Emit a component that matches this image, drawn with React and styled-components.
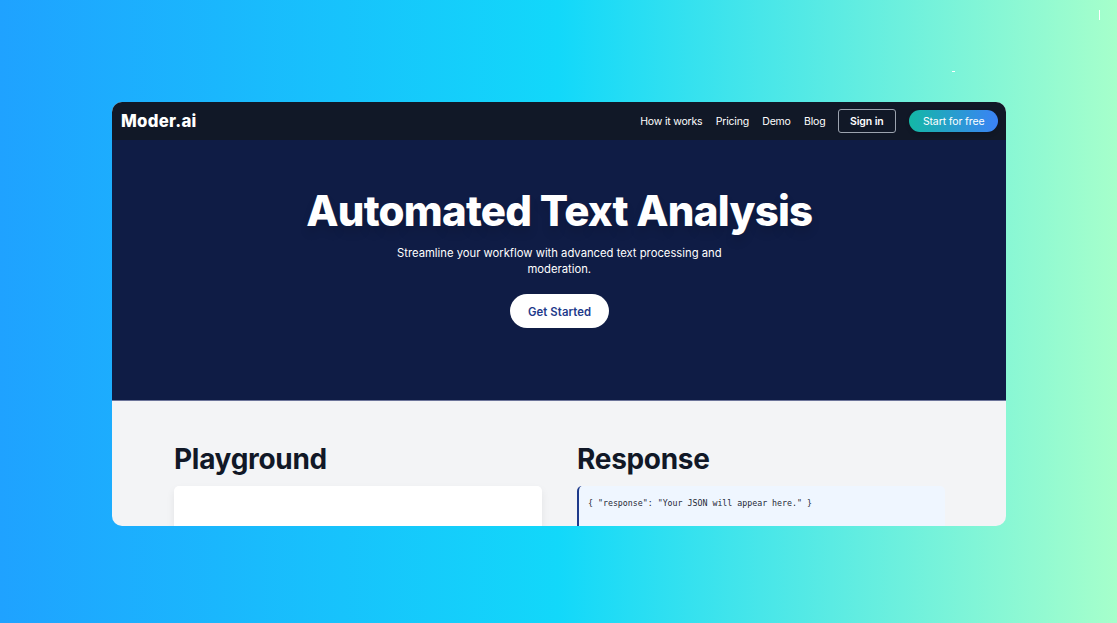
import React from "react";
import styled, { createGlobalStyle } from "styled-components";

const GlobalStyle = createGlobalStyle`
  * { box-sizing: border-box; }
  body {
    margin: 0;
    font-family: Inter, "Liberation Sans", sans-serif;
    color: #111827;
  }
  h1, h2, p, pre { margin: 0; }
  button { font-family: inherit; cursor: pointer; }
`;

const Backdrop = styled.div`
  position: relative;
  height: 623px;
  padding: 102.4px 111.4px 97px 112px;
  overflow: hidden;
  background: linear-gradient(to right, #1fa2ff, #12d8fa, #a6ffcb);
`;

const Mark = styled.span`
  position: absolute;
  top: ${(p) => p.$top}px;
  left: ${(p) => p.$left}px;
  width: ${(p) => p.$width}px;
  height: ${(p) => p.$height}px;
  background: #fff;
`;

const Window = styled.div`
  display: flex;
  flex-direction: column;
  height: 423.6px;
  border-radius: 10px;
  overflow: hidden;
  background: #f3f4f6;
`;

const Header = styled.header`
  display: flex;
  align-items: center;
  justify-content: space-between;
  flex: none;
  height: 37.6px;
  padding: 0 7.4px 1px 9px;
  background: #111827;
`;

const Logo = styled.span`
  font-size: 16.8px;
  font-weight: 800;
  letter-spacing: 0.25px;
  line-height: 24px;
  color: #fff;
`;

const Nav = styled.nav`
  display: flex;
  align-items: center;
  gap: 13.4px;
`;

const NavLink = styled.a`
  font-size: 10.5px;
  letter-spacing: -0.2px;
  line-height: 16px;
  padding-top: 2px;
  color: #fff;
  text-decoration: none;
  white-space: nowrap;
`;

const SignInButton = styled.button`
  width: 58px;
  height: 24px;
  margin-left: -1px;
  padding: 1px 0 0;
  border: 1px solid #9ca3af;
  border-radius: 3px;
  background: transparent;
  font-size: 10.5px;
  font-weight: 600;
  letter-spacing: -0.1px;
  color: #fff;
`;

const StartButton = styled.button`
  width: 89px;
  height: 22px;
  padding: 1px 0 0;
  border: 0;
  border-radius: 11px;
  background: linear-gradient(to right, #14b8a6, #3b82f6);
  box-shadow: 0 2px 4px rgba(0, 0, 0, 0.15);
  font-size: 10.5px;
  letter-spacing: -0.12px;
  color: #fff;
`;

const Hero = styled.section`
  display: flex;
  flex-direction: column;
  align-items: center;
  flex: none;
  height: 261px;
  padding: 50px 0 0 1px;
  background: #0f1c45;
  border-bottom: 1px solid #6c749a;
  color: #fff;
  text-align: center;
`;

const Title = styled.h1`
  font-size: 42px;
  font-weight: 800;
  letter-spacing: -0.75px;
  line-height: 42px;
  white-space: nowrap;
  text-shadow: 0 7px 10px rgba(0, 0, 0, 0.12);
`;

const Subtitle = styled.p`
  width: 340px;
  margin-top: 13px;
  font-size: 11.25px;
  line-height: 16px;
`;

const PrimaryButton = styled.button`
  width: 99.6px;
  height: 34px;
  margin: 17.4px 0 0 0.6px;
  padding: 1.6px 0 0;
  border: 0;
  border-radius: 17px;
  background: #fff;
  font-size: 11.3px;
  font-weight: 600;
  letter-spacing: 0.1px;
  color: #1e3a8a;
`;

const Workspace = styled.main`
  display: grid;
  grid-template-columns: 368px 368px;
  column-gap: 35px;
  flex: 1;
  padding: 42px 0 0 62px;
`;

const Panel = styled.section`
  display: flex;
  flex-direction: column;
`;

const PanelTitle = styled.h2`
  margin-bottom: 10px;
  font-size: 28px;
  font-weight: 700;
  letter-spacing: -0.3px;
  line-height: 33px;
`;

const Editor = styled.div`
  flex: 1;
  border-radius: 5px 5px 0 0;
  background: #fff;
  box-shadow: 0 4px 9px rgba(0, 0, 0, 0.07);
`;

const Output = styled.pre`
  flex: 1;
  padding: 12px 9px 0;
  border-left: 2px solid #1e3a8a;
  border-radius: 5px 5px 0 0;
  background: #eff6ff;
  font-family: "DejaVu Sans Mono", monospace;
  font-size: 8.27px;
  line-height: 11px;
  color: #1f2937;
`;

const links = ["How it works", "Pricing", "Demo", "Blog"];

export default function App() {
  return (
    <>
      <GlobalStyle />
      <Backdrop>
        <Mark $top={10} $left={1099} $width={1} $height={10} />
        <Mark $top={71} $left={952} $width={3} $height={1} />
        <Window>
          <Header>
            <Logo>Moder.ai</Logo>
            <Nav>
              {links.map((label) => (
                <NavLink key={label}>{label}</NavLink>
              ))}
              <SignInButton>Sign in</SignInButton>
              <StartButton>Start for free</StartButton>
            </Nav>
          </Header>
          <Hero>
            <Title>Automated Text Analysis</Title>
            <Subtitle>
              Streamline your workflow with advanced text processing and
              moderation.
            </Subtitle>
            <PrimaryButton>Get Started</PrimaryButton>
          </Hero>
          <Workspace>
            <Panel>
              <PanelTitle>Playground</PanelTitle>
              <Editor />
            </Panel>
            <Panel>
              <PanelTitle>Response</PanelTitle>
              <Output>{'{ "response": "Your JSON will appear here." }'}</Output>
            </Panel>
          </Workspace>
        </Window>
      </Backdrop>
    </>
  );
}
